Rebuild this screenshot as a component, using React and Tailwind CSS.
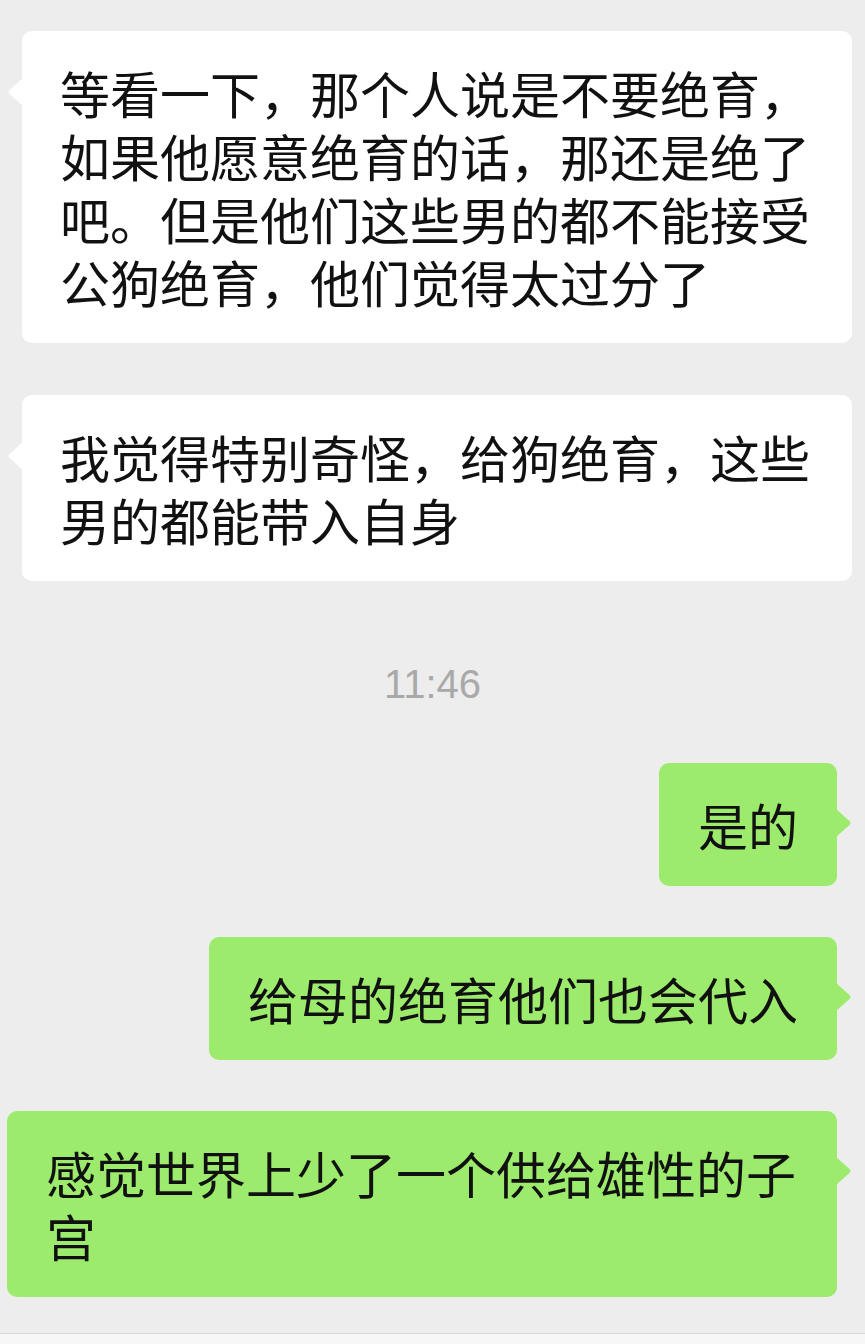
const FONT = { fontFamily: '"Noto Sans CJK SC", "Noto Sans", sans-serif' };

const messages = [
  { id: 1, side: 'left', text: '等看一下，那个人说是不要绝育，如果他愿意绝育的话，那还是绝了吧。但是他们这些男的都不能接受公狗绝育，他们觉得太过分了' },
  { id: 2, side: 'left', text: '我觉得特别奇怪，给狗绝育，这些男的都能带入自身' },
  { id: 3, side: 'time', text: '11:46' },
  { id: 4, side: 'right', text: '是的' },
  { id: 5, side: 'right', text: '给母的绝育他们也会代入' },
  { id: 6, side: 'right', text: '感觉世界上少了一个供给雄性的子宫' },
];

function Tail({ side, color }) {
  if (side === 'left') {
    return (
      <svg className="absolute left-[-15px] top-[47px]" width="16" height="28" viewBox="0 0 16 28">
        <path d="M16 0 L2.5 12 Q0.5 14 2.5 16 L16 28 Z" fill={color} />
      </svg>
    );
  }
  return (
    <svg className="absolute right-[-15px] top-[46px]" width="16" height="28" viewBox="0 0 16 28">
      <path d="M0 0 L13.5 12 Q15.5 14 13.5 16 L0 28 Z" fill={color} />
    </svg>
  );
}

function Bubble({ side, text }) {
  const left = side === 'left';
  return (
    <div className={left ? 'flex justify-start pl-[22px]' : 'flex justify-end pr-[28px]'}>
      <div
        className={`relative max-w-[830px] rounded-[10px] text-[50px] leading-[63px] text-[#111111] ${
          left ? 'bg-white py-[30px] pl-[38px] pr-[38px]' : 'bg-[#9deb6c] py-[30px] pl-[39px] pr-[39px]'
        }`}
        style={FONT}
      >
        <Tail side={side} color={left ? '#ffffff' : '#9deb6c'} />
        {text}
      </div>
    </div>
  );
}

export default function App() {
  return (
    <div className="flex min-h-[1344px] w-[865px] flex-col bg-[#ededed]">
      <div className="flex flex-1 flex-col pt-[31px]">
        <Bubble side="left" text={messages[0].text} />
        <div className="mt-[52px]">
          <Bubble side="left" text={messages[1].text} />
        </div>
        <div
          className="mb-[55px] mt-[79px] text-center text-[40px] leading-[48px] text-[#a9a9a9]"
          style={{ fontFamily: '"Liberation Sans", Arial, sans-serif' }}
        >
          {messages[2].text}
        </div>
        <Bubble side="right" text={messages[3].text} />
        <div className="mt-[51px]">
          <Bubble side="right" text={messages[4].text} />
        </div>
        <div className="mt-[51px]">
          <Bubble side="right" text={messages[5].text} />
        </div>
      </div>
      <div className="h-[11px] border-t border-[#d6d6d6] bg-[#f7f7f7]" />
    </div>
  );
}
